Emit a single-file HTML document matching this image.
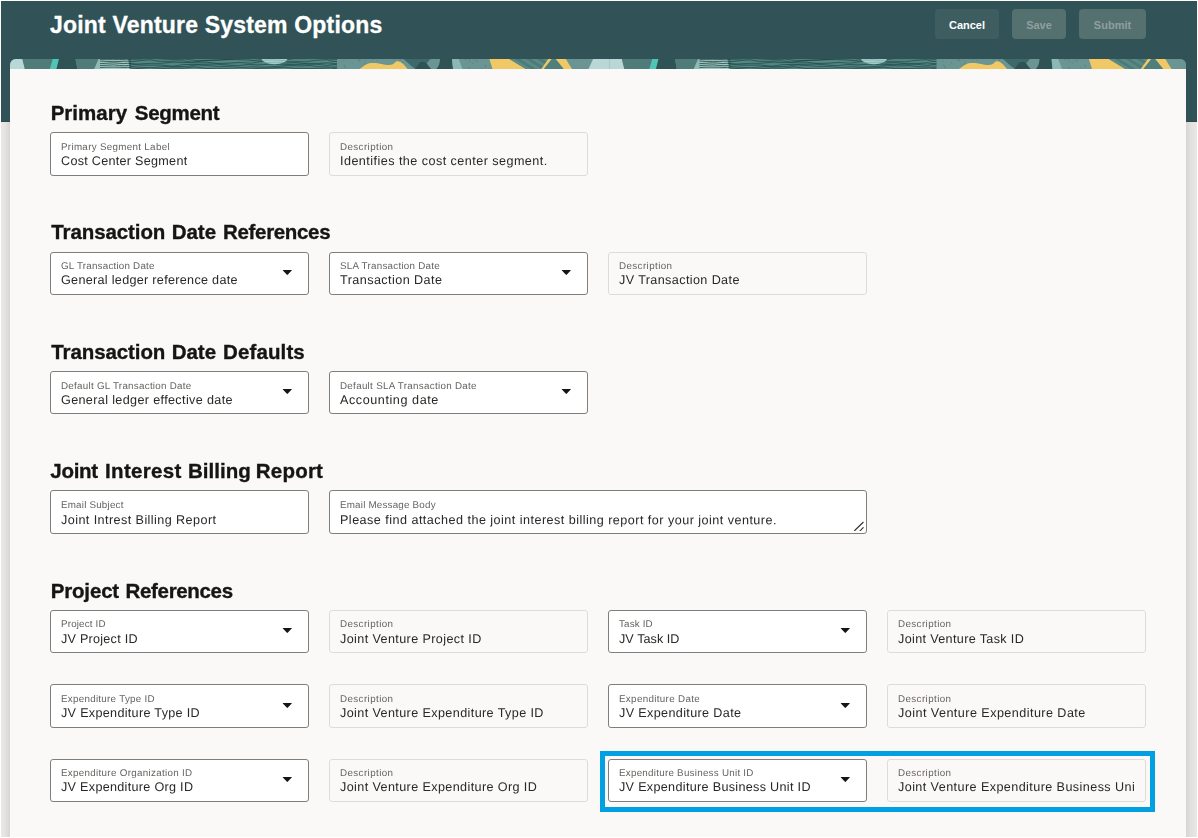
<!DOCTYPE html>
<html lang="en">
<head>
<meta charset="utf-8">
<title>Joint Venture System Options</title>
<style>
*{box-sizing:border-box;margin:0;padding:0}
html,body{width:1198px;height:838px;overflow:hidden;background:#fff}
body{font-family:"Liberation Sans",sans-serif;position:relative;color:#161513}
#bg{position:absolute;left:1px;top:1px;width:1196px;height:836px;background:#e9e7e5}
#hdr{position:absolute;left:1px;top:1px;width:1196px;height:120.5px;background:#315357;border-bottom:1px solid #2a494c}
#title{position:absolute;left:50px;top:11px;font-size:23px;font-weight:bold;color:#fff;-webkit-text-stroke:0.3px #fff;white-space:nowrap;line-height:28px}
.btn{position:absolute;top:9px;height:30px;border-radius:4px;font-size:11px;font-weight:bold;text-align:center;line-height:32px;color:#fff;background:#3e5d61}
.btn.dis{background:#54706f;color:#8ea09f}
#strip{position:absolute;left:10px;top:59px;width:1176px;height:10px;border-radius:6px 6px 0 0;overflow:hidden;background:#6a9592}
#panel{position:absolute;left:10px;top:69px;width:1176px;height:768px;background:#fbf9f8}
#shl{position:absolute;left:1px;top:122px;width:9px;height:715px;background:linear-gradient(to right,#ebe9e7,#e4e2df 50%,#d7d5d2)}
#shr{position:absolute;left:1186px;top:122px;width:11px;height:715px;background:linear-gradient(to right,#d7d5d2,#e2e0dd 40%,#eae8e6)}
h2{position:absolute;left:50px;font-size:20.5px;font-weight:bold;-webkit-text-stroke:0.35px #161513;white-space:nowrap;line-height:24px;color:#161513}
.f{position:absolute;width:259px;height:44px;border:1px solid #807e7b;border-radius:3px;background:#fff}
.f.ro{border-color:#dedcd9;background:#fbf9f8}
.f .l{position:absolute;left:10px;top:7.5px;font-size:9.8px;line-height:12px;transform:matrix(1,0.0005,0,1,0,0);transform-origin:0 80%;color:#66635f;white-space:nowrap}
.f .v{position:absolute;left:10px;top:20px;font-size:12.6px;line-height:16px;color:#292826;transform:matrix(1,0.0005,0,1,0,0);transform-origin:0 80%;white-space:nowrap;overflow:hidden}
.f .a{position:absolute;left:231px;top:18px;width:10px;height:5px}
.f .rz{position:absolute;right:2px;bottom:2px;width:11px;height:10px}
#hl{position:absolute;left:600px;top:751px;width:555px;height:61px;border:5px solid #00a0e3}
#content{position:absolute;left:0;top:0;width:1198px;height:838px;will-change:transform}
h2 span{position:absolute;top:0;left:0}
</style>
</head>
<body>
<div id="bg"></div>
<div id="hdr"></div>
<div id="shl"></div><div id="shr"></div>
<div id="title" style="letter-spacing:0.189px;">Joint Venture System Options</div>
<div class="btn" style="left:935px;width:64px;">Cancel</div>
<div class="btn dis" style="left:1012px;width:54px;">Save</div>
<div class="btn dis" style="left:1079px;width:67px;">Submit</div>
<div id="strip"><svg width="1176" height="10" viewBox="0 0 1176 10" style="display:block"><g><rect width="600" height="10" fill="#6a9592"/><path d="M0 0L12.4 0L14.9 10L0 10z" fill="#b9d7d6"/><path d="M12.4 0L42.8 0L39.9 10L14.9 10z" fill="#4f7c78"/><path d="M42.8 0L49 0L46.5 10L39.9 10z" fill="#4ec5b5"/><path d="M49 0L65.5 0L67.4 10L46.5 10z" fill="#2f5255"/><path d="M65.5 0L88.6 0L84.25 10L67.4 10z" fill="#4f7c78"/><path d="M88.6 0L90 0L90 10L84.25 10z" fill="#8dbab6"/><path d="M90 0L118 0L120.5 10L90 10z" fill="#9ccac5"/><path d="M118 0L327 0L327 10L120.5 10z" fill="#4e837f"/><path d="M121.0 3.89Q132.3 1.97 143.6 3.85Q155.7 1.94 167.7 2.44Q179.8 2.84 191.8 1.54Q202.9 2.82 214.1 2.73Q226.7 2.34 239.4 3.52Q251.6 3.19 263.9 4.23Q275.7 1.91 287.5 3.06Q300.2 2.15 312.9 1.81Q319.9 3.76 327.0 3.81" stroke="#6a9c98" stroke-width="1.0" fill="none" opacity=".45"/><path d="M121.0 8.11Q133.2 6.89 145.3 7.57Q157.4 6.14 169.5 5.94Q180.9 7.03 192.3 6.75Q204.0 7.09 215.6 7.94Q227.2 7.68 238.8 8.34Q250.3 7.26 261.8 6.85Q274.5 6.69 287.3 6.45Q300.2 7.00 313.2 6.02Q320.1 7.17 327.0 7.49" stroke="#6a9c98" stroke-width="1.0" fill="none" opacity=".45"/><path d="M90.0 0.59Q96.3 0.56 102.7 0.66Q109.4 0.66 116.2 0.27Q118.6 0.46 121.0 0.70" stroke="#2a4443" stroke-width="0.9" fill="none" opacity=".9"/><path d="M90.0 2.10Q96.9 2.54 103.8 2.72Q108.9 2.52 114.0 2.19Q117.5 2.22 121.0 2.28" stroke="#2a4443" stroke-width="0.9" fill="none" opacity=".9"/><path d="M90.0 4.63Q96.3 4.37 102.7 3.91Q108.0 4.03 113.3 4.58Q117.2 4.19 121.0 4.42" stroke="#2a4443" stroke-width="0.9" fill="none" opacity=".9"/><path d="M90.0 6.52Q96.7 6.26 103.5 5.87Q109.6 6.57 115.7 6.78Q118.3 6.23 121.0 6.36" stroke="#2a4443" stroke-width="0.9" fill="none" opacity=".9"/><path d="M90.0 8.57Q96.8 8.01 103.5 8.14Q108.9 8.08 114.2 8.52Q117.6 8.10 121.0 8.53" stroke="#2a4443" stroke-width="0.9" fill="none" opacity=".9"/><path d="M119.0 0.33Q129.8 0.50 140.7 -1.07Q152.6 0.35 164.5 0.52Q175.7 -1.04 187.0 1.77Q198.8 1.42 210.6 0.97Q222.2 -0.00 233.7 -0.98Q244.0 -1.01 254.2 0.48Q264.3 -0.71 274.4 1.05Q285.1 -1.20 295.8 -1.05Q306.1 -0.11 316.4 -0.79Q321.7 0.64 327.0 0.26" stroke="#1c3f41" stroke-width="0.75" fill="none" opacity=".85"/><path d="M119.0 3.00Q129.5 1.59 140.0 0.71Q150.3 3.48 160.5 2.34Q171.4 0.76 182.4 3.23Q192.6 1.29 202.8 1.24Q214.4 0.57 226.1 0.38Q238.0 0.94 249.9 2.03Q261.0 2.08 272.1 2.66Q284.0 2.59 296.0 2.77Q306.5 1.00 317.0 0.58Q322.0 2.84 327.0 2.63" stroke="#1c3f41" stroke-width="0.75" fill="none" opacity=".85"/><path d="M119.0 5.00Q129.4 5.35 139.9 4.33Q151.6 4.85 163.3 3.07Q174.8 3.95 186.3 3.14Q197.0 2.48 207.7 4.55Q218.2 4.48 228.8 3.42Q240.7 5.21 252.6 2.60Q264.6 3.49 276.6 3.91Q287.0 2.99 297.5 4.80Q307.9 5.10 318.3 3.80Q322.6 4.36 327.0 5.12" stroke="#1c3f41" stroke-width="0.75" fill="none" opacity=".85"/><path d="M119.0 4.41Q129.2 6.83 139.3 6.14Q150.9 5.53 162.5 7.15Q172.8 5.10 183.2 5.37Q194.8 5.29 206.4 5.01Q217.2 6.27 228.0 6.77Q238.3 4.55 248.7 5.93Q260.5 4.54 272.3 5.25Q283.9 6.07 295.6 5.07Q306.3 4.49 317.0 6.43Q322.0 6.05 327.0 4.95" stroke="#1c3f41" stroke-width="0.75" fill="none" opacity=".85"/><path d="M119.0 7.29Q130.9 8.62 142.7 8.61Q154.4 6.76 166.0 7.71Q176.6 7.76 187.2 5.95Q197.7 6.39 208.2 7.50Q220.1 7.37 231.9 8.55Q243.1 7.26 254.2 8.19Q266.1 7.60 277.9 6.35Q288.9 7.32 300.0 6.49Q310.4 8.40 320.7 8.13Q323.9 8.18 327.0 7.81" stroke="#1c3f41" stroke-width="0.75" fill="none" opacity=".85"/><path d="M119.0 8.87Q129.7 9.47 140.3 10.57Q151.9 9.48 163.4 8.96Q173.9 10.12 184.4 7.79Q195.5 10.08 206.5 9.71Q218.3 9.64 230.1 10.48Q241.1 9.88 252.1 9.18Q263.0 9.23 273.9 8.13Q285.8 10.43 297.7 9.50Q309.6 9.48 321.5 10.19Q324.2 8.21 327.0 9.84" stroke="#1c3f41" stroke-width="0.75" fill="none" opacity=".85"/><ellipse cx="264.5" cy="-0.5" rx="13" ry="5.8" fill="#a4cfcb"/><path d="M252.0 1.41Q257.4 1.01 262.8 0.90Q267.4 1.40 272.1 1.54Q274.5 1.36 277.0 1.30" stroke="#5c8885" stroke-width="0.6" fill="none" opacity=".6"/><path d="M252.0 3.15Q256.8 3.74 261.6 3.69Q266.5 3.33 271.5 3.24Q274.2 3.64 277.0 3.40" stroke="#5c8885" stroke-width="0.6" fill="none" opacity=".6"/><circle cx="342.1" cy="3.9" r="0.66" fill="#4f7d7a" opacity=".7"/><circle cx="355.4" cy="1.8" r="0.56" fill="#4f7d7a" opacity=".7"/><circle cx="384.2" cy="0.2" r="0.68" fill="#4f7d7a" opacity=".7"/><circle cx="363.0" cy="0.2" r="0.57" fill="#4f7d7a" opacity=".7"/><circle cx="376.8" cy="4.6" r="0.43" fill="#4f7d7a" opacity=".7"/><circle cx="403.9" cy="7.1" r="0.89" fill="#4f7d7a" opacity=".7"/><circle cx="337.9" cy="2.4" r="0.42" fill="#4f7d7a" opacity=".7"/><circle cx="388.4" cy="2.4" r="0.46" fill="#4f7d7a" opacity=".7"/><circle cx="361.7" cy="8.2" r="0.81" fill="#4f7d7a" opacity=".7"/><circle cx="349.4" cy="1.3" r="0.86" fill="#4f7d7a" opacity=".7"/><circle cx="372.8" cy="6.3" r="0.44" fill="#4f7d7a" opacity=".7"/><circle cx="334.3" cy="6.2" r="0.61" fill="#4f7d7a" opacity=".7"/><circle cx="335.4" cy="8.4" r="0.72" fill="#4f7d7a" opacity=".7"/><circle cx="390.1" cy="0.8" r="0.83" fill="#4f7d7a" opacity=".7"/><circle cx="335.0" cy="7.8" r="0.63" fill="#4f7d7a" opacity=".7"/><circle cx="355.4" cy="5.0" r="0.86" fill="#4f7d7a" opacity=".7"/><circle cx="350.1" cy="1.2" r="0.66" fill="#4f7d7a" opacity=".7"/><circle cx="347.9" cy="1.0" r="0.48" fill="#4f7d7a" opacity=".7"/><circle cx="333.8" cy="1.8" r="0.56" fill="#4f7d7a" opacity=".7"/><circle cx="352.9" cy="6.8" r="0.54" fill="#4f7d7a" opacity=".7"/><circle cx="367.5" cy="1.6" r="0.57" fill="#4f7d7a" opacity=".7"/><circle cx="331.4" cy="2.3" r="0.41" fill="#4f7d7a" opacity=".7"/><circle cx="385.0" cy="5.0" r="0.49" fill="#4f7d7a" opacity=".7"/><circle cx="365.6" cy="8.4" r="0.45" fill="#4f7d7a" opacity=".7"/><circle cx="391.4" cy="3.9" r="0.65" fill="#4f7d7a" opacity=".7"/><circle cx="392.6" cy="3.5" r="0.65" fill="#4f7d7a" opacity=".7"/><path d="M349.4 10C353 8 356 4.2 361 4C370 3.6 375 6.4 379 6C386 5.4 384 2.2 387.5 2.2C392 2.2 395 7 397.5 10z" fill="#f0c865"/><path d="M393.3 0C397 2.5 401 7.5 405.7 10L442 10L442 0z" fill="#3d696b"/><path d="M424 0L442 0L443 10L424 10z" fill="#2f5255"/><path d="M420.3 0L430 0C430 4 428.5 8 426.3 10L415 10L417 4z" fill="#6a9592"/><path d="M404.6 10C407.6 8 408.4 2.8 412.8 2.8C417.2 2.8 418.2 8 421.4 10z" fill="#2f5255"/><path d="M442 0L448.75 0L452.5 10L443 10z" fill="#8bb8b4"/><circle cx="471.3" cy="8.8" r="0.57" fill="#4f7d7a" opacity=".6"/><circle cx="475.3" cy="6.4" r="0.72" fill="#4f7d7a" opacity=".6"/><circle cx="463.3" cy="3.1" r="0.43" fill="#4f7d7a" opacity=".6"/><circle cx="455.6" cy="0.6" r="0.77" fill="#4f7d7a" opacity=".6"/><circle cx="459.2" cy="1.5" r="0.44" fill="#4f7d7a" opacity=".6"/><circle cx="475.6" cy="7.8" r="0.74" fill="#4f7d7a" opacity=".6"/><circle cx="459.9" cy="2.2" r="0.55" fill="#4f7d7a" opacity=".6"/><circle cx="464.9" cy="1.4" r="0.62" fill="#4f7d7a" opacity=".6"/><circle cx="459.4" cy="8.7" r="0.89" fill="#4f7d7a" opacity=".6"/><circle cx="467.3" cy="2.2" r="0.88" fill="#4f7d7a" opacity=".6"/><circle cx="460.7" cy="3.2" r="0.40" fill="#4f7d7a" opacity=".6"/><circle cx="462.7" cy="4.3" r="0.65" fill="#4f7d7a" opacity=".6"/><circle cx="457.6" cy="4.5" r="0.40" fill="#4f7d7a" opacity=".6"/><circle cx="459.4" cy="0.8" r="0.60" fill="#4f7d7a" opacity=".6"/><path d="M479.4 0L499.3 0L515.8 10L482.5 10z" fill="#f0c865"/><path d="M499.3 0L545.8 0L553.75 10L515.8 10z" fill="#5a8986"/><path d="M505 0L510 0L526 10L521 10z" fill="#4b7b79"/><path d="M516 0L521 0L537 10L532 10z" fill="#4b7b79"/><path d="M527 0L532 0L548 10L543 10z" fill="#4b7b79"/><path d="M538 0L543 0L559 10L554 10z" fill="#4b7b79"/><path d="M540 0L545.8 0L553.75 10L532 10z" fill="#4f7f7c"/><path d="M538.3 0L541.7 0L533.75 10L531.25 10z" fill="#f0c865"/><path d="M545.8 0L555.8 0L562 10L553.75 10z" fill="#f0c865"/><path d="M583.1 0L600 0L600 10L578.5 10z" fill="#b9d7d6"/></g><g transform="translate(599.5 0)"><rect width="600" height="10" fill="#6a9592"/><path d="M0 0L12.4 0L14.9 10L0 10z" fill="#b9d7d6"/><path d="M12.4 0L42.8 0L39.9 10L14.9 10z" fill="#4f7c78"/><path d="M42.8 0L49 0L46.5 10L39.9 10z" fill="#4ec5b5"/><path d="M49 0L65.5 0L67.4 10L46.5 10z" fill="#2f5255"/><path d="M65.5 0L88.6 0L84.25 10L67.4 10z" fill="#4f7c78"/><path d="M88.6 0L90 0L90 10L84.25 10z" fill="#8dbab6"/><path d="M90 0L118 0L120.5 10L90 10z" fill="#9ccac5"/><path d="M118 0L327 0L327 10L120.5 10z" fill="#4e837f"/><path d="M121.0 3.89Q132.3 1.97 143.6 3.85Q155.7 1.94 167.7 2.44Q179.8 2.84 191.8 1.54Q202.9 2.82 214.1 2.73Q226.7 2.34 239.4 3.52Q251.6 3.19 263.9 4.23Q275.7 1.91 287.5 3.06Q300.2 2.15 312.9 1.81Q319.9 3.76 327.0 3.81" stroke="#6a9c98" stroke-width="1.0" fill="none" opacity=".45"/><path d="M121.0 8.11Q133.2 6.89 145.3 7.57Q157.4 6.14 169.5 5.94Q180.9 7.03 192.3 6.75Q204.0 7.09 215.6 7.94Q227.2 7.68 238.8 8.34Q250.3 7.26 261.8 6.85Q274.5 6.69 287.3 6.45Q300.2 7.00 313.2 6.02Q320.1 7.17 327.0 7.49" stroke="#6a9c98" stroke-width="1.0" fill="none" opacity=".45"/><path d="M90.0 0.59Q96.3 0.56 102.7 0.66Q109.4 0.66 116.2 0.27Q118.6 0.46 121.0 0.70" stroke="#2a4443" stroke-width="0.9" fill="none" opacity=".9"/><path d="M90.0 2.10Q96.9 2.54 103.8 2.72Q108.9 2.52 114.0 2.19Q117.5 2.22 121.0 2.28" stroke="#2a4443" stroke-width="0.9" fill="none" opacity=".9"/><path d="M90.0 4.63Q96.3 4.37 102.7 3.91Q108.0 4.03 113.3 4.58Q117.2 4.19 121.0 4.42" stroke="#2a4443" stroke-width="0.9" fill="none" opacity=".9"/><path d="M90.0 6.52Q96.7 6.26 103.5 5.87Q109.6 6.57 115.7 6.78Q118.3 6.23 121.0 6.36" stroke="#2a4443" stroke-width="0.9" fill="none" opacity=".9"/><path d="M90.0 8.57Q96.8 8.01 103.5 8.14Q108.9 8.08 114.2 8.52Q117.6 8.10 121.0 8.53" stroke="#2a4443" stroke-width="0.9" fill="none" opacity=".9"/><path d="M119.0 0.33Q129.8 0.50 140.7 -1.07Q152.6 0.35 164.5 0.52Q175.7 -1.04 187.0 1.77Q198.8 1.42 210.6 0.97Q222.2 -0.00 233.7 -0.98Q244.0 -1.01 254.2 0.48Q264.3 -0.71 274.4 1.05Q285.1 -1.20 295.8 -1.05Q306.1 -0.11 316.4 -0.79Q321.7 0.64 327.0 0.26" stroke="#1c3f41" stroke-width="0.75" fill="none" opacity=".85"/><path d="M119.0 3.00Q129.5 1.59 140.0 0.71Q150.3 3.48 160.5 2.34Q171.4 0.76 182.4 3.23Q192.6 1.29 202.8 1.24Q214.4 0.57 226.1 0.38Q238.0 0.94 249.9 2.03Q261.0 2.08 272.1 2.66Q284.0 2.59 296.0 2.77Q306.5 1.00 317.0 0.58Q322.0 2.84 327.0 2.63" stroke="#1c3f41" stroke-width="0.75" fill="none" opacity=".85"/><path d="M119.0 5.00Q129.4 5.35 139.9 4.33Q151.6 4.85 163.3 3.07Q174.8 3.95 186.3 3.14Q197.0 2.48 207.7 4.55Q218.2 4.48 228.8 3.42Q240.7 5.21 252.6 2.60Q264.6 3.49 276.6 3.91Q287.0 2.99 297.5 4.80Q307.9 5.10 318.3 3.80Q322.6 4.36 327.0 5.12" stroke="#1c3f41" stroke-width="0.75" fill="none" opacity=".85"/><path d="M119.0 4.41Q129.2 6.83 139.3 6.14Q150.9 5.53 162.5 7.15Q172.8 5.10 183.2 5.37Q194.8 5.29 206.4 5.01Q217.2 6.27 228.0 6.77Q238.3 4.55 248.7 5.93Q260.5 4.54 272.3 5.25Q283.9 6.07 295.6 5.07Q306.3 4.49 317.0 6.43Q322.0 6.05 327.0 4.95" stroke="#1c3f41" stroke-width="0.75" fill="none" opacity=".85"/><path d="M119.0 7.29Q130.9 8.62 142.7 8.61Q154.4 6.76 166.0 7.71Q176.6 7.76 187.2 5.95Q197.7 6.39 208.2 7.50Q220.1 7.37 231.9 8.55Q243.1 7.26 254.2 8.19Q266.1 7.60 277.9 6.35Q288.9 7.32 300.0 6.49Q310.4 8.40 320.7 8.13Q323.9 8.18 327.0 7.81" stroke="#1c3f41" stroke-width="0.75" fill="none" opacity=".85"/><path d="M119.0 8.87Q129.7 9.47 140.3 10.57Q151.9 9.48 163.4 8.96Q173.9 10.12 184.4 7.79Q195.5 10.08 206.5 9.71Q218.3 9.64 230.1 10.48Q241.1 9.88 252.1 9.18Q263.0 9.23 273.9 8.13Q285.8 10.43 297.7 9.50Q309.6 9.48 321.5 10.19Q324.2 8.21 327.0 9.84" stroke="#1c3f41" stroke-width="0.75" fill="none" opacity=".85"/><ellipse cx="264.5" cy="-0.5" rx="13" ry="5.8" fill="#a4cfcb"/><path d="M252.0 1.41Q257.4 1.01 262.8 0.90Q267.4 1.40 272.1 1.54Q274.5 1.36 277.0 1.30" stroke="#5c8885" stroke-width="0.6" fill="none" opacity=".6"/><path d="M252.0 3.15Q256.8 3.74 261.6 3.69Q266.5 3.33 271.5 3.24Q274.2 3.64 277.0 3.40" stroke="#5c8885" stroke-width="0.6" fill="none" opacity=".6"/><circle cx="342.1" cy="3.9" r="0.66" fill="#4f7d7a" opacity=".7"/><circle cx="355.4" cy="1.8" r="0.56" fill="#4f7d7a" opacity=".7"/><circle cx="384.2" cy="0.2" r="0.68" fill="#4f7d7a" opacity=".7"/><circle cx="363.0" cy="0.2" r="0.57" fill="#4f7d7a" opacity=".7"/><circle cx="376.8" cy="4.6" r="0.43" fill="#4f7d7a" opacity=".7"/><circle cx="403.9" cy="7.1" r="0.89" fill="#4f7d7a" opacity=".7"/><circle cx="337.9" cy="2.4" r="0.42" fill="#4f7d7a" opacity=".7"/><circle cx="388.4" cy="2.4" r="0.46" fill="#4f7d7a" opacity=".7"/><circle cx="361.7" cy="8.2" r="0.81" fill="#4f7d7a" opacity=".7"/><circle cx="349.4" cy="1.3" r="0.86" fill="#4f7d7a" opacity=".7"/><circle cx="372.8" cy="6.3" r="0.44" fill="#4f7d7a" opacity=".7"/><circle cx="334.3" cy="6.2" r="0.61" fill="#4f7d7a" opacity=".7"/><circle cx="335.4" cy="8.4" r="0.72" fill="#4f7d7a" opacity=".7"/><circle cx="390.1" cy="0.8" r="0.83" fill="#4f7d7a" opacity=".7"/><circle cx="335.0" cy="7.8" r="0.63" fill="#4f7d7a" opacity=".7"/><circle cx="355.4" cy="5.0" r="0.86" fill="#4f7d7a" opacity=".7"/><circle cx="350.1" cy="1.2" r="0.66" fill="#4f7d7a" opacity=".7"/><circle cx="347.9" cy="1.0" r="0.48" fill="#4f7d7a" opacity=".7"/><circle cx="333.8" cy="1.8" r="0.56" fill="#4f7d7a" opacity=".7"/><circle cx="352.9" cy="6.8" r="0.54" fill="#4f7d7a" opacity=".7"/><circle cx="367.5" cy="1.6" r="0.57" fill="#4f7d7a" opacity=".7"/><circle cx="331.4" cy="2.3" r="0.41" fill="#4f7d7a" opacity=".7"/><circle cx="385.0" cy="5.0" r="0.49" fill="#4f7d7a" opacity=".7"/><circle cx="365.6" cy="8.4" r="0.45" fill="#4f7d7a" opacity=".7"/><circle cx="391.4" cy="3.9" r="0.65" fill="#4f7d7a" opacity=".7"/><circle cx="392.6" cy="3.5" r="0.65" fill="#4f7d7a" opacity=".7"/><path d="M349.4 10C353 8 356 4.2 361 4C370 3.6 375 6.4 379 6C386 5.4 384 2.2 387.5 2.2C392 2.2 395 7 397.5 10z" fill="#f0c865"/><path d="M393.3 0C397 2.5 401 7.5 405.7 10L442 10L442 0z" fill="#3d696b"/><path d="M424 0L442 0L443 10L424 10z" fill="#2f5255"/><path d="M420.3 0L430 0C430 4 428.5 8 426.3 10L415 10L417 4z" fill="#6a9592"/><path d="M404.6 10C407.6 8 408.4 2.8 412.8 2.8C417.2 2.8 418.2 8 421.4 10z" fill="#2f5255"/><path d="M442 0L448.75 0L452.5 10L443 10z" fill="#8bb8b4"/><circle cx="471.3" cy="8.8" r="0.57" fill="#4f7d7a" opacity=".6"/><circle cx="475.3" cy="6.4" r="0.72" fill="#4f7d7a" opacity=".6"/><circle cx="463.3" cy="3.1" r="0.43" fill="#4f7d7a" opacity=".6"/><circle cx="455.6" cy="0.6" r="0.77" fill="#4f7d7a" opacity=".6"/><circle cx="459.2" cy="1.5" r="0.44" fill="#4f7d7a" opacity=".6"/><circle cx="475.6" cy="7.8" r="0.74" fill="#4f7d7a" opacity=".6"/><circle cx="459.9" cy="2.2" r="0.55" fill="#4f7d7a" opacity=".6"/><circle cx="464.9" cy="1.4" r="0.62" fill="#4f7d7a" opacity=".6"/><circle cx="459.4" cy="8.7" r="0.89" fill="#4f7d7a" opacity=".6"/><circle cx="467.3" cy="2.2" r="0.88" fill="#4f7d7a" opacity=".6"/><circle cx="460.7" cy="3.2" r="0.40" fill="#4f7d7a" opacity=".6"/><circle cx="462.7" cy="4.3" r="0.65" fill="#4f7d7a" opacity=".6"/><circle cx="457.6" cy="4.5" r="0.40" fill="#4f7d7a" opacity=".6"/><circle cx="459.4" cy="0.8" r="0.60" fill="#4f7d7a" opacity=".6"/><path d="M479.4 0L499.3 0L515.8 10L482.5 10z" fill="#f0c865"/><path d="M499.3 0L545.8 0L553.75 10L515.8 10z" fill="#5a8986"/><path d="M505 0L510 0L526 10L521 10z" fill="#4b7b79"/><path d="M516 0L521 0L537 10L532 10z" fill="#4b7b79"/><path d="M527 0L532 0L548 10L543 10z" fill="#4b7b79"/><path d="M538 0L543 0L559 10L554 10z" fill="#4b7b79"/><path d="M540 0L545.8 0L553.75 10L532 10z" fill="#4f7f7c"/><path d="M538.3 0L541.7 0L533.75 10L531.25 10z" fill="#f0c865"/><path d="M545.8 0L555.8 0L562 10L553.75 10z" fill="#f0c865"/><path d="M583.1 0L600 0L600 10L578.5 10z" fill="#b9d7d6"/></g></svg></div>
<div id="panel"></div>
<div id="content">

<h2 id="h0" style="top:100.6px"><span id="h0w0" style="left:0.70px;letter-spacing:-0.000px">Primary</span> <span id="h0w1" style="left:84.80px;letter-spacing:-0.300px">Segment</span></h2>
<div class="f" style="left:50px;top:132px"><span class="l" id="l0" style="letter-spacing:0.310px;">Primary Segment Label</span><span class="v" id="v0" style="max-width:238px;letter-spacing:0.283px;">Cost Center Segment</span></div>
<div class="f ro" style="left:329px;top:132px"><span class="l" id="l1" style="letter-spacing:0.400px;">Description</span><span class="v" id="v1" style="max-width:236.5px;letter-spacing:0.453px;">Identifies the cost center segment.</span></div>

<h2 id="h1" style="top:220.1px"><span id="h1w0" style="left:1.30px;letter-spacing:-0.100px">Transaction</span> <span id="h1w1" style="left:121.80px;letter-spacing:-0.067px">Date</span> <span id="h1w2" style="left:173.05px;letter-spacing:-0.333px">References</span></h2>
<div class="f" style="left:50px;top:252px;height:43px"><span class="l" id="l2" style="top:6.5px;letter-spacing:0.222px;">GL Transaction Date</span><span class="v" id="v2" style="top:19px;max-width:238px;letter-spacing:0.304px;">General ledger reference date</span><svg class="a" style="top:17px" viewBox="0 0 10 5"><path d="M1.2 0L9.4 0Q10.2 0 9.7.6L5.65 4.85Q5.3 5.15 4.95 4.85L.9.6Q.4 0 1.2 0z" fill="#161513"/></svg></div>
<div class="f" style="left:329px;top:252px;height:43px"><span class="l" id="l3" style="top:6.5px;letter-spacing:0.263px;">SLA Transaction Date</span><span class="v" id="v3" style="top:19px;max-width:238px;letter-spacing:0.433px;">Transaction Date</span><svg class="a" style="top:17px" viewBox="0 0 10 5"><path d="M1.2 0L9.4 0Q10.2 0 9.7.6L5.65 4.85Q5.3 5.15 4.95 4.85L.9.6Q.4 0 1.2 0z" fill="#161513"/></svg></div>
<div class="f ro" style="left:608px;top:252px;height:43px"><span class="l" id="l4" style="top:6.5px;letter-spacing:0.400px;">Description</span><span class="v" id="v4" style="top:19px;max-width:236.5px;letter-spacing:0.389px;">JV Transaction Date</span></div>

<h2 id="h2" style="top:339.7px"><span id="h2w0" style="left:1.30px;letter-spacing:-0.100px">Transaction</span> <span id="h2w1" style="left:121.80px;letter-spacing:-0.067px">Date</span> <span id="h2w2" style="left:173.05px;letter-spacing:0.114px">Defaults</span></h2>
<div class="f" style="left:50px;top:371px;height:43px"><span class="l" id="l5" style="letter-spacing:0.269px;">Default GL Transaction Date</span><span class="v" id="v5" style="max-width:238px;letter-spacing:0.357px;">General ledger effective date</span><svg class="a" style="top:17px" viewBox="0 0 10 5"><path d="M1.2 0L9.4 0Q10.2 0 9.7.6L5.65 4.85Q5.3 5.15 4.95 4.85L.9.6Q.4 0 1.2 0z" fill="#161513"/></svg></div>
<div class="f" style="left:329px;top:371px;height:43px"><span class="l" id="l6" style="letter-spacing:0.296px;">Default SLA Transaction Date</span><span class="v" id="v6" style="max-width:238px;letter-spacing:0.571px;">Accounting date</span><svg class="a" style="top:17px" viewBox="0 0 10 5"><path d="M1.2 0L9.4 0Q10.2 0 9.7.6L5.65 4.85Q5.3 5.15 4.95 4.85L.9.6Q.4 0 1.2 0z" fill="#161513"/></svg></div>

<h2 id="h3" style="top:459.0px"><span id="h3w0" style="left:0.30px;letter-spacing:-0.276px">Joint</span> <span id="h3w1" style="left:55.05px;letter-spacing:0.315px">Interest</span> <span id="h3w2" style="left:138.05px;letter-spacing:0.017px">Billing</span> <span id="h3w3" style="left:205.80px;letter-spacing:0.220px">Report</span></h2>
<div class="f" style="left:50px;top:490px"><span class="l" id="l7" style="letter-spacing:0.208px;">Email Subject</span><span class="v" id="v7" style="top:21px;max-width:238px;letter-spacing:0.426px;">Joint Intrest Billing Report</span></div>
<div class="f" style="left:329px;top:490px;width:538px"><span class="l" id="l8" style="letter-spacing:0.206px;">Email Message Body</span><span class="v" id="v8" style="top:21px;max-width:517px;letter-spacing:0.468px;">Please find attached the joint interest billing report for your joint venture.</span><svg class="rz" viewBox="0 0 11 10"><path d="M1.7 9.5L10.2 1.3M7 9.8L10.2 6.6" stroke="#3a3836" stroke-width="1.2" fill="none" stroke-linecap="round"/></svg></div>

<h2 id="h4" style="top:578.5px"><span id="h4w0" style="left:0.70px;letter-spacing:-0.166px">Project</span> <span id="h4w1" style="left:75.55px;letter-spacing:-0.334px">References</span></h2>
<div class="f" style="left:50px;top:610px;height:43px"><span class="l" id="l9" style="top:6.5px;letter-spacing:0.167px;">Project ID</span><span class="v" id="v9" style="max-width:238px;letter-spacing:0.250px;">JV Project ID</span><svg class="a" style="top:17px" viewBox="0 0 10 5"><path d="M1.2 0L9.4 0Q10.2 0 9.7.6L5.65 4.85Q5.3 5.15 4.95 4.85L.9.6Q.4 0 1.2 0z" fill="#161513"/></svg></div>
<div class="f ro" style="left:329px;top:610px;height:43px"><span class="l" id="l10" style="top:6.5px;letter-spacing:0.400px;">Description</span><span class="v" id="v10" style="max-width:236.5px;letter-spacing:0.391px;">Joint Venture Project ID</span></div>
<div class="f" style="left:608px;top:610px;height:43px"><span class="l" id="l11" style="top:6.5px;letter-spacing:0.167px;">Task ID</span><span class="v" id="v11" style="max-width:238px;letter-spacing:0.056px;">JV Task ID</span><svg class="a" style="top:17px" viewBox="0 0 10 5"><path d="M1.2 0L9.4 0Q10.2 0 9.7.6L5.65 4.85Q5.3 5.15 4.95 4.85L.9.6Q.4 0 1.2 0z" fill="#161513"/></svg></div>
<div class="f ro" style="left:887px;top:610px;height:43px"><span class="l" id="l12" style="top:6.5px;letter-spacing:0.400px;">Description</span><span class="v" id="v12" style="max-width:236.5px;letter-spacing:0.350px;">Joint Venture Task ID</span></div>
<div class="f" style="left:50px;top:684px"><span class="l" id="l13" style="letter-spacing:0.278px;">Expenditure Type ID</span><span class="v" id="v13" style="max-width:238px;letter-spacing:0.310px;">JV Expenditure Type ID</span><svg class="a" viewBox="0 0 10 5"><path d="M1.2 0L9.4 0Q10.2 0 9.7.6L5.65 4.85Q5.3 5.15 4.95 4.85L.9.6Q.4 0 1.2 0z" fill="#161513"/></svg></div>
<div class="f ro" style="left:329px;top:684px"><span class="l" id="l14" style="letter-spacing:0.400px;">Description</span><span class="v" id="v14" style="max-width:236.5px;letter-spacing:0.391px;">Joint Venture Expenditure Type ID</span></div>
<div class="f" style="left:608px;top:684px"><span class="l" id="l15" style="letter-spacing:0.333px;">Expenditure Date</span><span class="v" id="v15" style="max-width:238px;letter-spacing:0.361px;">JV Expenditure Date</span><svg class="a" viewBox="0 0 10 5"><path d="M1.2 0L9.4 0Q10.2 0 9.7.6L5.65 4.85Q5.3 5.15 4.95 4.85L.9.6Q.4 0 1.2 0z" fill="#161513"/></svg></div>
<div class="f ro" style="left:887px;top:684px"><span class="l" id="l16" style="letter-spacing:0.400px;">Description</span><span class="v" id="v16" style="max-width:236.5px;letter-spacing:0.448px;">Joint Venture Expenditure Date</span></div>
<div class="f" style="left:50px;top:759px;height:43px"><span class="l" id="l17" style="top:6.5px;letter-spacing:0.308px;">Expenditure Organization ID</span><span class="v" id="v17" style="top:19px;max-width:238px;letter-spacing:0.300px;">JV Expenditure Org ID</span><svg class="a" style="top:17px" viewBox="0 0 10 5"><path d="M1.2 0L9.4 0Q10.2 0 9.7.6L5.65 4.85Q5.3 5.15 4.95 4.85L.9.6Q.4 0 1.2 0z" fill="#161513"/></svg></div>
<div class="f ro" style="left:329px;top:759px;height:43px"><span class="l" id="l18" style="top:6.5px;letter-spacing:0.400px;">Description</span><span class="v" id="v18" style="top:19px;max-width:236.5px;letter-spacing:0.387px;">Joint Venture Expenditure Org ID</span></div>
<div class="f" style="left:608px;top:759px;height:43px"><span class="l" id="l19" style="top:6.5px;letter-spacing:0.259px;">Expenditure Business Unit ID</span><span class="v" id="v19" style="top:19px;max-width:238px;letter-spacing:0.317px;">JV Expenditure Business Unit ID</span><svg class="a" style="top:17px" viewBox="0 0 10 5"><path d="M1.2 0L9.4 0Q10.2 0 9.7.6L5.65 4.85Q5.3 5.15 4.95 4.85L.9.6Q.4 0 1.2 0z" fill="#161513"/></svg></div>
<div class="f ro" style="left:887px;top:759px;height:43px"><span class="l" id="l20" style="top:6.5px;letter-spacing:0.400px;">Description</span><span class="v" id="v20" style="top:19px;max-width:236.5px;letter-spacing:0.419px;">Joint Venture Expenditure Business Uni</span></div>
<div id="hl"></div>
</div>
</body>
</html>
